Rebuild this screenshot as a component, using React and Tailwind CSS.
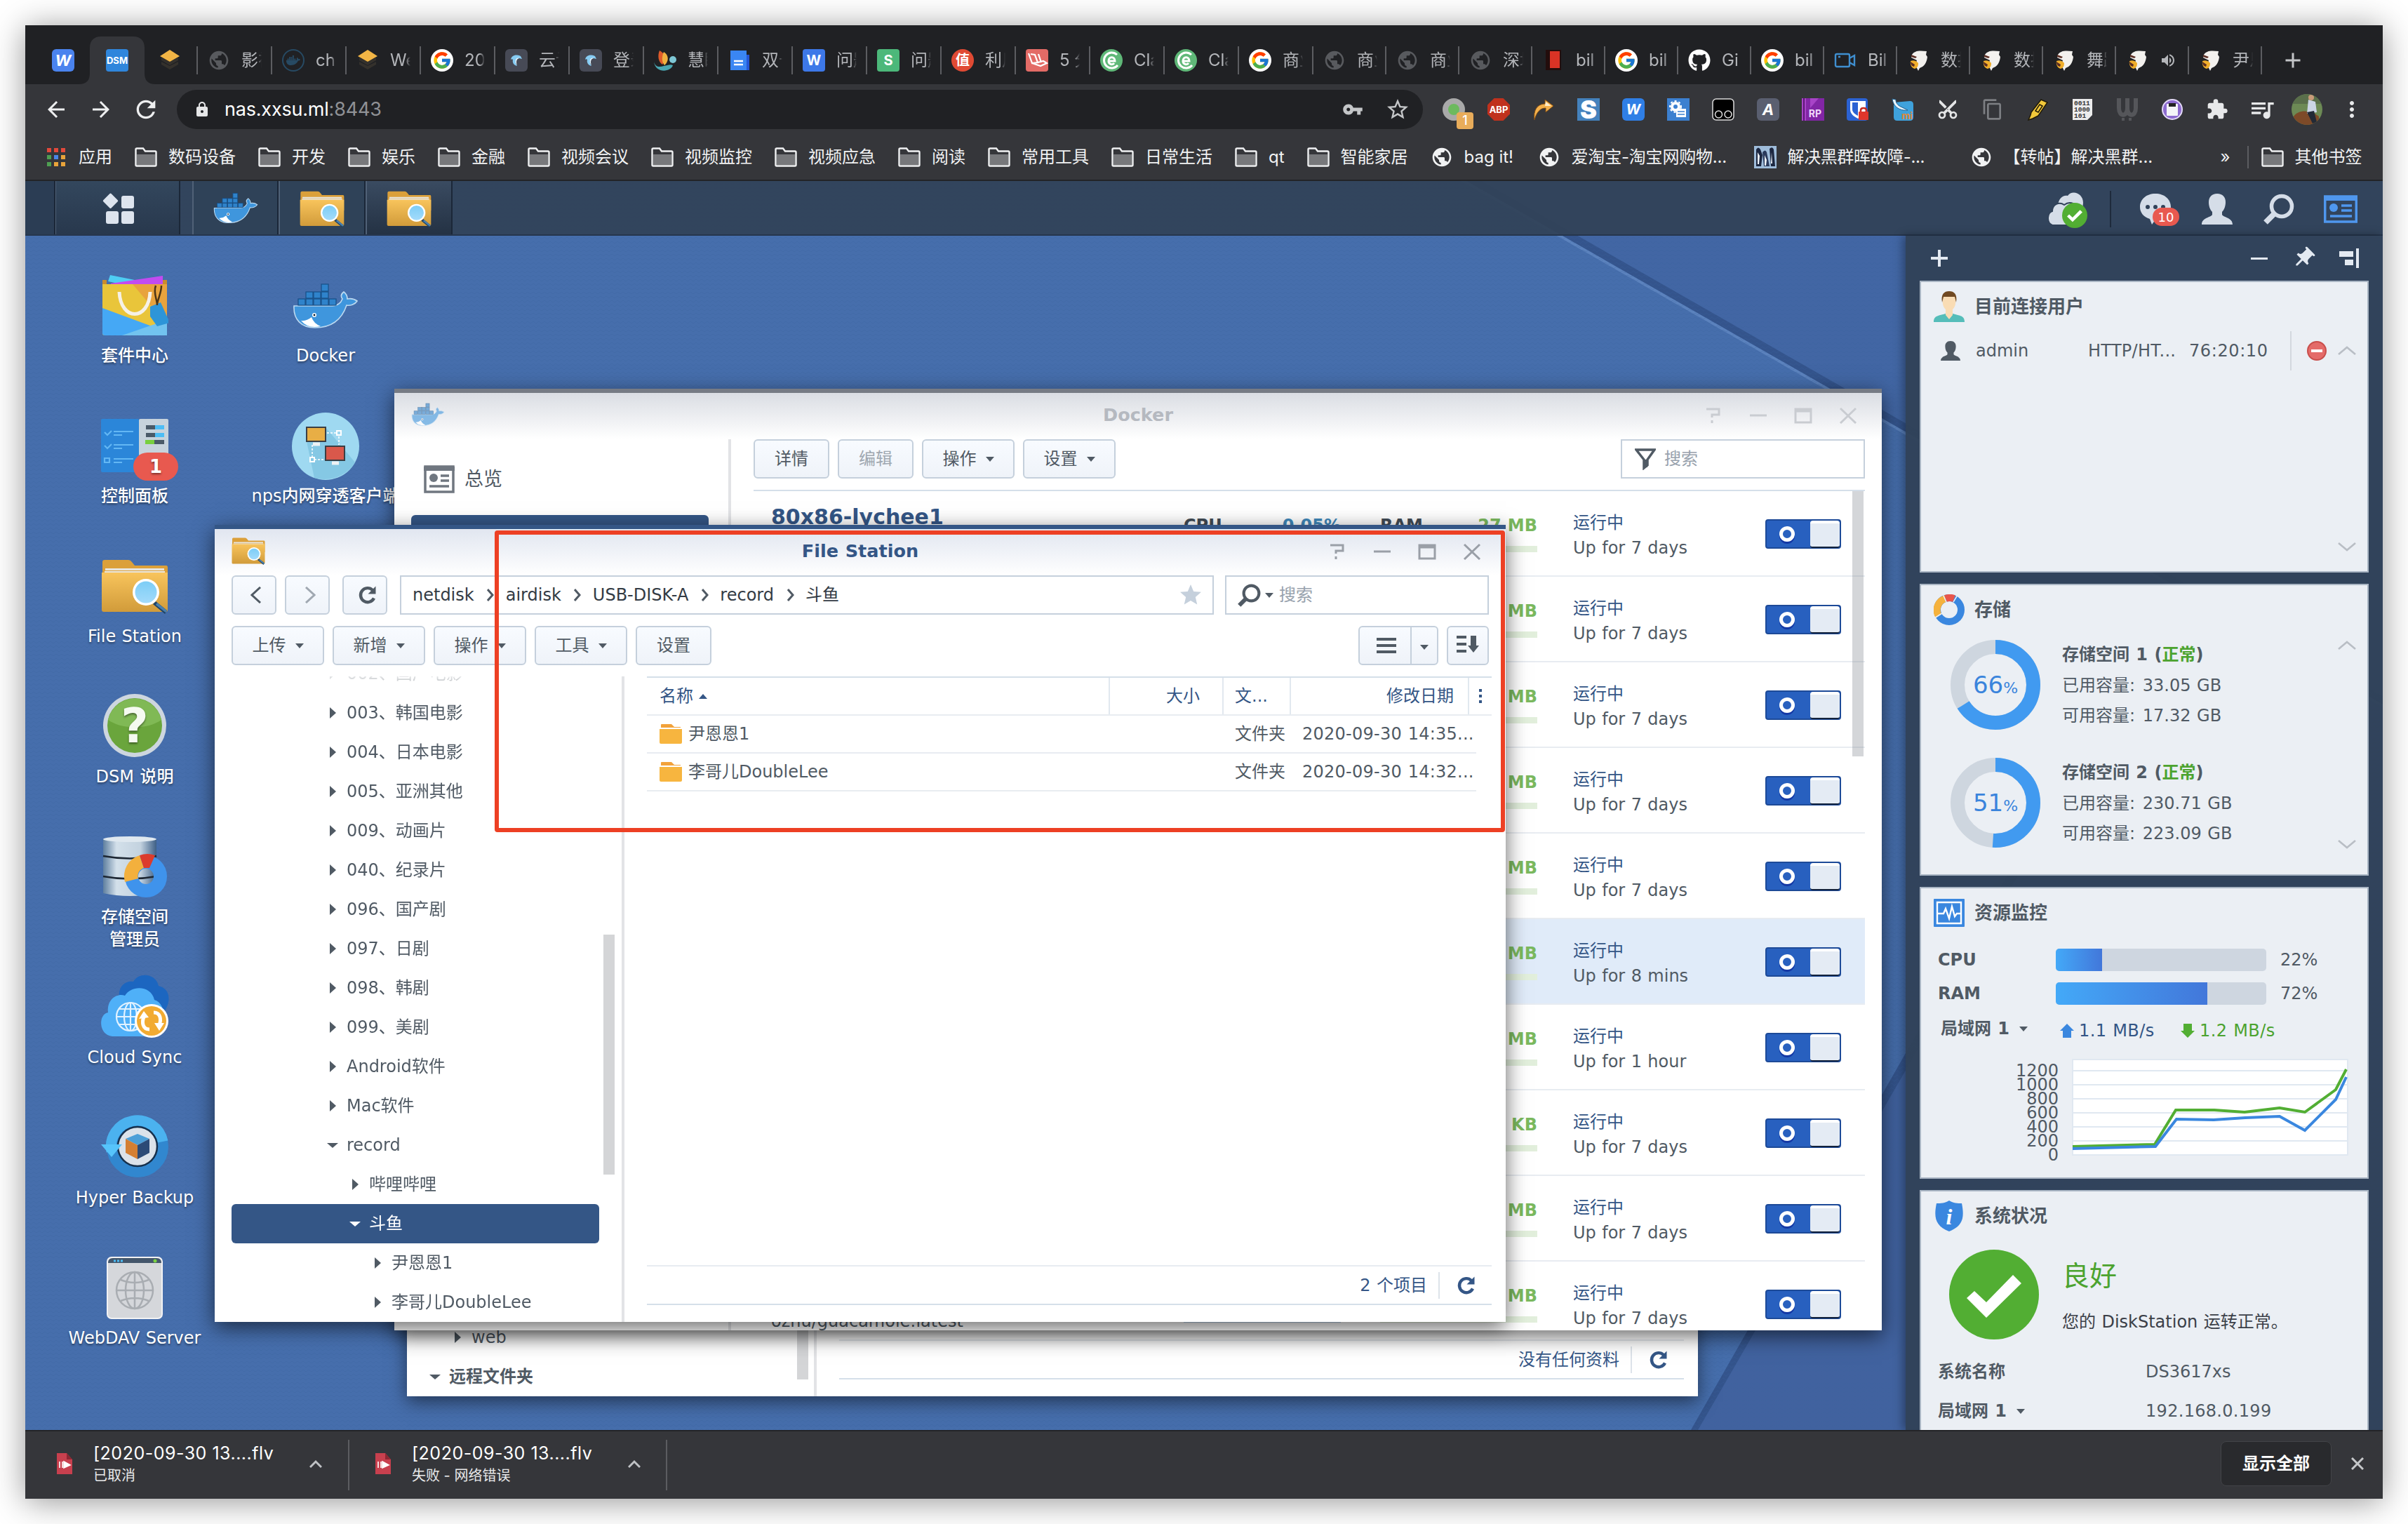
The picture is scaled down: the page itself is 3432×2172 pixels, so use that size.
import React from "react";
import { FcGoogle } from "react-icons/fc";
import { FaGithub, FaDocker } from "react-icons/fa";
import { MdPublic, MdLock, MdVpnKey, MdStarBorder, MdArrowBack, MdArrowForward, MdRefresh, MdVolumeUp, MdExtension, MdQueueMusic, MdMoreVert, MdContentCut, MdContentCopy, MdAdd, MdStar, MdPushPin } from "react-icons/md";

/* ---------- shared drawings ---------- */

function Folder({ className }) {
  return (
    <svg viewBox="0 0 96 78" className={className}>
      <path d="M2 4q0-3 3-3h34q3 0 5 3l4 5h45q2 0 2 3v30H2z" fill="#dba03a" />
      <path d="M6 13h84v3H6zM5 17h86v4H5z" fill="#e9e6df" />
      <path d="M1 19h94v53q0 3-3 3H4q-3 0-3-3z" fill="url(#folderGrad)" />
      <path d="M78 60l16 13-3 5-17-14z" fill="#1f4468" />
      <path d="M80 62l14 11-2 3-14-11z" fill="#4a80ad" />
      <circle cx="64" cy="47" r="19" fill="#fff" />
      <circle cx="64" cy="47" r="15.5" fill="url(#lensGrad)" />
    </svg>
  );
}

function Whale({ className }) {
  return (
    <svg viewBox="0 0 94 66" className={className}>
      <path
        d="M2 33H57C63 33 69 29 71 23C68 19 69 16 73 13C77 16 78 19 78 23C83 22 88 23 92 26C89 31 82 33 77 32C70 53 55 64 32 64C12 64 1 52 2 33Z"
        fill="#3f96dd"
        stroke="#bcd9f0"
        strokeWidth="1.6"
      />
      <g fill="#2f83cb" stroke="#174f86" strokeWidth="1.2">
        {[8, 19, 30, 41, 52].map((x) => (
          <rect key={x} x={x} y="23" width="10" height="9" />
        ))}
        {[19, 30, 41].map((x) => (
          <rect key={x} x={x} y="13" width="10" height="9" />
        ))}
        <rect x="41" y="2" width="10" height="10" />
      </g>
      <path d="M12 54q8 1 15-5q3 9 13 13q-18 4-28-8z" fill="#fff" />
      <circle cx="31" cy="46" r="3" fill="#fff" />
      <circle cx="31" cy="46" r="1.4" fill="#123" />
    </svg>
  );
}

const Person = ({ className }) => (
  <svg viewBox="0 0 44 44" className={className} fill="currentColor">
    <path d="M22 0c8 0 12 5 12 12 0 6-2 11-5 14v4c2 4 15 4 15 14H0c0-10 13-10 15-14v-4c-3-3-5-8-5-14C10 5 14 0 22 0z" />
  </svg>
);

const Search = ({ className }) => (
  <svg viewBox="0 0 44 44" className={className} fill="none" stroke="currentColor">
    <circle cx="26" cy="18" r="14.5" strokeWidth="5.5" />
    <path d="M15 29L3 41" strokeWidth="8" />
  </svg>
);

const Caret = ({ className }) => (
  <svg viewBox="0 0 12 7" className={className ?? "w-3"}>
    <path d="M0 0h12L6 7z" fill="currentColor" />
  </svg>
);

const Refresh = ({ className }) => (
  <svg viewBox="0 0 28 28" className={className} fill="none" stroke="currentColor" strokeWidth="4.4">
    <path d="M23 18.5A10 10 0 1 1 21 7" />
    <path d="M25.5 1.5v11h-11z" fill="currentColor" stroke="none" />
  </svg>
);

const Chevron = ({ up }) => (
  <svg viewBox="0 0 26 16" className="h-4 w-[26px]" fill="none" stroke="#b9bec5" strokeWidth="2.6">
    <path d={up ? "M1 13L13 3l12 10" : "M1 3l12 10L25 3"} />
  </svg>
);

const Check = ({ className }) => (
  <svg viewBox="0 0 128 128" className={className}>
    <circle cx="64" cy="64" r="64" fill="#52ae33" />
    <path d="M25 69l11-10 17 16 38-39 12 12-50 49z" fill="#fff" />
  </svg>
);

/* ---------- browser chrome ---------- */

const Glyph = ({ children, className }) => (
  <div className={"flex h-8 w-8 shrink-0 items-center justify-center overflow-hidden leading-none font-bold text-white " + className}>{children}</div>
);

const Stack = () => (
  <svg viewBox="0 0 32 32" className="h-8 w-8 shrink-0">
    <path d="M4 18l12 6 12-6v4l-12 7-12-7zM4 12l12 6 12-6v4l-12 7-12-7z" fill="#34312c" />
    <path d="M16 1l14 9-14 8L2 10z" fill="#f2b545" />
  </svg>
);

const Dolphin = () => (
  <Glyph className="rounded-md bg-[#474a56]">
    <svg viewBox="0 0 32 32" className="h-8 w-8">
      <path d="M8 15c1-6 7-8 14-5l2 4-4-1c-5 0-7 5-3 11-5-1-7-5-6-9-1-1-2-1-3 0z" fill="#86cbf2" />
      <path d="M15 15c1-2 3-3 5-2-4 1-5 5-3 10-2-2-3-5-2-8z" fill="#e9f6ff" />
    </svg>
  </Glyph>
);

const Shark = () => (
  <svg viewBox="0 0 32 32" className="h-8 w-8 shrink-0">
    <path d="M7 8c4-6 10-6 21-5l-1 5 2 3c-1 9-5 14-11 16l-2 4-2-4c-3-3-1-8 0-11l-8-4z" fill="#f3f1ee" />
    <path d="M5 17c4-2 9 0 11 3 0 5-2 7-5 8-4-1-7-5-6-11z" fill="#f0ae2b" />
    <path d="M6 8l8 3-2 2-6-2zM5 18l6 4-1 3c-4-1-5-4-5-7z" fill="#5b2d22" />
  </svg>
);

const Globe = () => <MdPublic className="h-8 w-8 shrink-0 text-[#585a5e]" />;
const Google = () => (
  <div className="flex h-8 w-8 shrink-0 items-center justify-center rounded-full bg-white">
    <FcGoogle className="h-7 w-7" />
  </div>
);

const Cc = () => (
  <Glyph className="rounded-full bg-[#5fb878]">
    <svg viewBox="0 0 32 32" className="h-8 w-8" fill="none" stroke="#fff" strokeWidth="3">
      <path d="M24 8a11 11 0 1 0 1 15M12 17h9c0-7-9-7-9 0 0 5 6 6 8 3" />
    </svg>
  </Glyph>
);

const wideTabs = [
  [<Globe />, "影视"],
  [
    <div className="flex h-8 w-8 shrink-0 items-center justify-center rounded-full border-2 border-[#274a63]">
      <FaDocker className="h-5 w-5 text-[#274a63]" />
    </div>,
    "ch",
  ],
  [<Stack />, "We"],
  [<Google />, "20"],
  [<Dolphin />, "云计"],
  [<Dolphin />, "登录"],
  [
    <svg viewBox="0 0 32 32" className="h-8 w-8 shrink-0">
      <path d="M8 2c8 4 10 13 4 20C6 18 5 9 8 2z" fill="#df5b2b" />
      <path d="M14 4c7 4 8 13 1 19-4-5-4-12-1-19z" fill="#f0b13f" />
      <path d="M0 18c2 8 8 8 14 6 5-1 10-3 13-1-3 10-25 12-27-5z" fill="#4aa7b2" />
      <circle cx="27" cy="15" r="5" fill="#7ec7d5" />
    </svg>,
    "慧眼",
  ],
  [
    <svg viewBox="0 0 32 32" className="h-8 w-8 shrink-0">
      <path d="M6 8h24v22H6z" fill="#2456d6" />
      <path d="M3 2h23v28H3z" fill="#3a86f3" />
      <path d="M8 17h13M8 22h13" stroke="#fff" strokeWidth="2.4" />
    </svg>,
    "双十",
  ],
  [<Glyph className="rounded-sm bg-[#3d78e8] text-[20px]">W</Glyph>, "问题"],
  [<Glyph className="rounded-sm bg-[#4cb87a] text-[20px]">S</Glyph>, "问题"],
  [<Glyph className="rounded-full bg-[#e04a33] text-[20px]">值</Glyph>, "利用"],
  [
    <Glyph className="rounded bg-[#e36b66]">
      <svg viewBox="0 0 32 32" className="h-8 w-8" fill="none" stroke="#fff" strokeWidth="2.2">
        <path d="M4 6l5 14 8-1-4-11-6-1M9 20l12 4 9-4-5-3-8 2M18 7l4 12" />
      </svg>
    </Glyph>,
    "5 分",
  ],
  [<Cc />, "Cla"],
  [<Cc />, "Cla"],
  [<Google />, "商业"],
];

const slimTabs = [
  [<Globe />, "商业"],
  [<Globe />, "商业"],
  [<Globe />, "深圳"],
  [
    <svg viewBox="0 0 32 32" className="h-8 w-8 shrink-0">
      <path d="M5 1h22v29H5z" fill="#230d0c" />
      <path d="M11 3h14v24H11z" fill="#d93325" />
    </svg>,
    "bil",
  ],
  [<Google />, "bil"],
  [<FaGithub className="h-8 w-8 shrink-0 text-white" />, "Gi"],
  [<Google />, "bil"],
  [
    <svg viewBox="0 0 32 32" className="h-8 w-8 shrink-0" fill="none" stroke="#3f8fd0" strokeWidth="2.4">
      <rect x="2" y="7" width="20" height="18" rx="2" />
      <path d="M22 13l7-4v14l-7-4M6 11h3" />
    </svg>,
    "Bil",
  ],
  [<Shark />, "数据"],
  [<Shark />, "数据"],
  [<Shark />, "舞蹈"],
  [<Shark />, <MdVolumeUp className="h-6 w-6" />],
  [<Shark />, "尹恩"],
];

function Tab({ icon, label, className }) {
  return (
    <div className={"flex h-full shrink-0 items-center pt-4 pl-[14px] " + className}>
      {icon}
      <div className="ml-4 w-[29px] overflow-hidden text-[24px] whitespace-nowrap text-[#b4b6ba] [mask-image:linear-gradient(to_right,black_74%,transparent)]">{label}</div>
      <div className="ml-auto h-10 w-[2px] bg-[#5c5d61]" />
    </div>
  );
}

function TabStrip() {
  return (
    <div className="flex h-[84px] shrink-0 items-center bg-[#202124]">
      <div className="h-full w-[92px] pt-[34px] pl-[38px]">
        <Glyph className="rounded-md bg-[#4a83ee] text-[22px] italic">W</Glyph>
      </div>
      <div className="relative h-full w-[78px] pt-[34px] pl-[23px]">
        <svg viewBox="0 0 110 68" className="absolute top-4 left-[-16px] h-[68px] w-[110px]">
          <path d="M0 68c12 0 16-6 16-16V16C16 6 22 0 32 0h46c10 0 16 6 16 16v36c0 10 4 16 16 16z" fill="#35363a" />
        </svg>
        <Glyph className="relative rounded-sm bg-[#2f86dc] text-[13px]">DSM</Glyph>
      </div>
      <div className="flex h-full w-[76px] items-center pt-4 pl-5">
        <Stack />
        <div className="ml-auto h-10 w-[2px] bg-[#5c5d61]" />
      </div>
      {wideTabs.map(([icon, label], i) => (
        <Tab key={i} icon={icon} label={label} className="w-[106px]" />
      ))}
      {slimTabs.map(([icon, label], i) => (
        <Tab key={i} icon={icon} label={label} className="w-[104px]" />
      ))}
      <MdAdd className="mt-4 ml-[26px] h-9 w-9 text-[#c3c5c8]" />
    </div>
  );
}

const extensions = [
  <div className="relative">
    <div className="h-8 w-8 rounded-full border-[8px] border-[#a9a9a9] bg-[#6cba5e]" />
    <div className="absolute top-5 left-5 flex h-6 w-6 items-center justify-center rounded bg-[#e8ac5a] text-[18px] leading-none font-medium text-white">1</div>
  </div>,
  <svg viewBox="0 0 32 32" className="h-8 w-8">
    <path d="M9.500 0h13L32 9.500v13L22.500 32h-13L0 22.500v-13z" fill="#c0311d" />
    <text x="16" y="21" textAnchor="middle" fontSize="13" fontWeight="700" fill="#fff">ABP</text>
  </svg>,
  <svg viewBox="0 0 32 32" className="h-8 w-8">
    <path d="M3 31C1 17 7 8 18 8V2l12 9-11 9v-6C11 14 6 20 3 31z" fill="#f4b14c" stroke="#7d4a12" />
    <path d="M19 5l8 6H18z" fill="#fdeccb" />
  </svg>,
  <svg viewBox="0 0 32 32" className="h-8 w-8">
    <path d="M0 0h32v32H0z" fill="#4482bd" />
    <text x="16" y="29" textAnchor="middle" fontSize="36" fontWeight="900" fill="#fff">S</text>
  </svg>,
  <Glyph className="rounded-md bg-[#2f7fe6] text-[20px] italic">W</Glyph>,
  <svg viewBox="0 0 32 32" className="h-8 w-8">
    <rect width="32" height="32" fill="#3c80d0" />
    <circle cx="12" cy="12" r="5" fill="none" stroke="#fff" strokeWidth="4" />
    <circle cx="12" cy="12" r="8" fill="none" stroke="#fff" strokeWidth="2" strokeDasharray="3 3" />
    <path d="M13 15h14v12H13z" fill="#fff" />
    <path d="M15 19h10M15 23h10" stroke="#3c80d0" strokeWidth="1.500" />
  </svg>,
  <svg viewBox="0 0 32 32" className="h-8 w-8" stroke="#ddd">
    <rect x="1" y="1" width="30" height="30" rx="5" fill="#000" strokeWidth="1.500" />
    <circle cx="9.500" cy="23" r="5" fill="none" strokeWidth="1.500" />
    <circle cx="23" cy="23" r="5" fill="none" strokeWidth="1.500" />
  </svg>,
  <Glyph className="rounded-md bg-[#5a5f70] text-[22px] italic">A</Glyph>,
  <svg viewBox="0 0 32 32" className="h-8 w-8">
    <path d="M0 0h32v32H0z" fill="#8226a6" />
    <path d="M0 0h6v32H0zM12 0h12L12 14z" fill="#a844c8" />
    <path d="M2 0h2v32H2z" fill="#5d1578" />
    <text x="19" y="27" textAnchor="middle" fontSize="14" fontWeight="700" fill="#f0d8fa">RP</text>
  </svg>,
  <svg viewBox="0 0 32 32" className="h-8 w-8">
    <rect width="30" height="32" rx="4" fill="#2b62d3" />
    <path d="M5 4h22v12c0 6-5 10-11 13C10 26 5 22 5 16z" fill="#fff" />
    <path d="M8 6h8v19c-4-2-8-5-8-9z" fill="#2b62d3" />
    <path d="M20 20v-3c0-4 8-4 8 0v3" fill="none" stroke="#c82a20" strokeWidth="2.500" />
    <rect x="17" y="19" width="14" height="12" rx="1" fill="#e0362b" />
  </svg>,
  <svg viewBox="0 0 32 32" className="h-8 w-8">
    <path d="M3 6l23-2q5 0 5 5v18q0 5-5 5H8q-5 0-5-5z" fill="#3fa2dc" />
    <path d="M1 1l5 1c0 6 4 9 9 11l8 4c-8 1-20-2-22-16z" fill="#e9f6ff" stroke="#1c5d8c" />
    <text x="22" y="30" textAnchor="middle" fontSize="13" fontWeight="700" fill="#e8872f">mi</text>
  </svg>,
  <MdContentCut className="h-8 w-8 -rotate-90 text-[#e4e5e6]" />,
  <MdContentCopy className="h-8 w-8 text-[#7d7f83]" />,
  <svg viewBox="0 0 32 32" className="h-8 w-8">
    <path d="M21 2l9 4-13 19-8 4-6 2 3-7 1-4z" fill="#f2c83b" stroke="#201a08" strokeWidth="1.500" />
    <path d="M19 9l4 2-6 9-4-2z" fill="none" stroke="#201a08" strokeWidth="1.500" />
  </svg>,
  <svg viewBox="0 0 32 32" className="h-8 w-8">
    <path d="M2 1h28v23l-7 7H2z" fill="#ececec" />
    <g fontSize="9.500" fontWeight="700" fill="#333" fontFamily="Liberation Mono">
      <text x="4" y="10">0011</text>
      <text x="4" y="19">1000</text>
      <text x="4" y="28">101</text>
    </g>
  </svg>,
  <svg viewBox="0 0 32 32" className="h-8 w-8" fill="none" stroke="#55565a" strokeWidth="6">
    <path d="M4 0v14c0 13 12 13 12 0V0M16 0v14c0 13 12 13 12 0V0" />
    <path d="M10 28v4M20 28v4" strokeWidth="4" />
  </svg>,
  <svg viewBox="0 0 32 32" className="h-8 w-8">
    <circle cx="16" cy="16" r="14" fill="#8d6bd0" stroke="#e3d9f7" strokeWidth="2" />
    <rect x="8" y="8" width="16" height="17" rx="1" fill="#f4f4f8" />
    <rect x="11" y="7" width="10" height="5" fill="#222" />
  </svg>,
  <MdExtension className="h-8 w-8 text-[#e8e9ea]" />,
  <MdQueueMusic className="h-10 w-10 text-[#e8e9ea]" />,
  <svg viewBox="0 0 44 44" className="h-11 w-11">
    <clipPath id="avatarClip">
      <circle cx="22" cy="22" r="22" />
    </clipPath>
    <g clipPath="url(#avatarClip)">
      <path d="M0 0h44v44H0z" fill="#6d8a55" />
      <path d="M0 0h44v14H0z" fill="#5a6f4b" />
      <path d="M3 32c6-10 24-10 36 0v12H3z" fill="#7d4a28" />
      <path d="M24 8l10 3 2 15-14 2z" fill="#ccd6e6" />
      <circle cx="28" cy="5" r="4" fill="#c99b7a" />
      <path d="M22 26l10-2 4 16-6 2z" fill="#222a36" />
    </g>
  </svg>,
  <MdMoreVert className="h-9 w-9 text-[#e8e9ea]" />,
];

function Toolbar() {
  return (
    <div className="flex h-[72px] shrink-0 items-center bg-[#35363a] pl-3">
      {[<MdArrowBack key="b" className="h-9 w-9" />, <MdArrowForward key="f" className="h-9 w-9" />, <MdRefresh key="r" className="h-10 w-10" />].map((icon, i) => (
        <div key={i} className="flex w-16 justify-center text-[#eeeff0]">
          {icon}
        </div>
      ))}
      <div className="ml-3 flex h-14 w-[1776px] items-center rounded-full bg-[#202124] pl-6 text-[27px]">
        <MdLock className="h-6 w-6 text-[#e6e7e8]" />
        <div className="ml-5 tracking-[-0.2px] text-white">
          nas.xxsu.ml<span className="text-[#8f9195]">:8443</span>
        </div>
        <MdVpnKey className="ml-auto h-[30px] w-[30px] text-[#c4c6c8]" />
        <MdStarBorder className="mr-[18px] ml-[31px] h-9 w-9 text-[#c4c6c8]" />
      </div>
      <div className="ml-3 flex">
        {extensions.map((icon, i) => (
          <div key={i} className="flex w-16 items-center justify-center">
            {icon}
          </div>
        ))}
      </div>
    </div>
  );
}

const BookmarkFolder = () => (
  <svg viewBox="0 0 32 28" className="h-7 w-8 shrink-0">
    <path d="M1.500 3q0-1.500 1.500-1.500h9l3 4h14q1.500 0 1.500 1.500v18q0 1.500-1.500 1.500H3q-1.500 0-1.500-1.500z" fill="#35363a" stroke="#f0f1f2" strokeWidth="2.400" />
    <path d="M3 10h26v15H3z" fill="#77787b" />
  </svg>
);

const Penguins = () => (
  <svg viewBox="0 0 32 32" className="h-8 w-8 shrink-0">
    <path d="M0 0h32v32H0z" fill="#9fbddb" />
    <path d="M3 5q3-5 6 0l3 8-2 16H3z" fill="#1c2740" />
    <path d="M12 9q4-5 6 0l4 20h-8z" fill="#2a3a5c" />
    <path d="M22 4q4-4 6 1l2 24h-6z" fill="#1c2740" />
    <path d="M5 9l3 5-1 12H5zM15 13l3 7-1 8h-2zM25 9l1 16h-2z" fill="#eef3f8" />
  </svg>
);

const bookmarks = ["数码设备", "开发", "娱乐", "金融", "视频会议", "视频监控", "视频应急", "阅读", "常用工具", "日常生活", "qt", "智能家居"];

function Bookmarks() {
  return (
    <div className="flex h-[66px] shrink-0 items-center border-b-2 border-[#232427] bg-[#35363a] pl-[29px] text-[24px] whitespace-nowrap text-[#f1f2f3]">
      <div className="grid w-8 shrink-0 grid-cols-[6px_6px_6px] gap-1 pl-0.5">
        {["bg-[#e2493b]", "bg-[#e2493b]", "bg-[#e2493b]", "bg-[#4f9f52]", "bg-[#4a86e8]", "bg-[#e8a33a]", "bg-[#4f9f52]", "bg-[#e8a33a]", "bg-[#e8a33a]"].map((c, i) => (
          <div key={i} className={"h-[6px] w-[6px] " + c} />
        ))}
      </div>
      <div className="ml-[15px] w-20 shrink-0">应用</div>
      {bookmarks.map((b) => (
        <div key={b} className="mr-8 flex shrink-0 items-center gap-4">
          <BookmarkFolder />
          {b}
        </div>
      ))}
      <div className="flex w-[153px] shrink-0 items-center gap-4">
        <MdPublic className="h-8 w-8 shrink-0" />
        bag it!
      </div>
      <div className="flex w-[308px] shrink-0 items-center gap-4">
        <MdPublic className="h-8 w-8 shrink-0" />
        <span className="tracking-[-0.2px]">爱淘宝-淘宝网购物...</span>
      </div>
      <div className="flex w-[308px] shrink-0 items-center gap-4">
        <Penguins />
        <span className="tracking-[-0.4px]">解决黑群晖故障-...</span>
      </div>
      <div className="flex w-[357px] shrink-0 items-center gap-4">
        <MdPublic className="h-8 w-8 shrink-0" />
        <span>【转帖】解决黑群...</span>
      </div>
      <div className="w-[38px] shrink-0">»</div>
      <div className="h-8 w-[2px] shrink-0 bg-[#5c5d61]" />
      <div className="ml-[18px] flex shrink-0 items-center gap-4">
        <BookmarkFolder />
        其他书签
      </div>
    </div>
  );
}

/* ---------- DSM desktop ---------- */

function Wallpaper() {
  return (
    <svg viewBox="0 0 3360 1780" className="absolute inset-0 h-[1780px] w-[3360px]">
      <defs>
        <linearGradient id="folderGrad" x2="0" y2="1">
          <stop stopColor="#f8c45c" />
          <stop offset="1" stopColor="#d19b3a" />
        </linearGradient>
        <linearGradient id="lensGrad" x2="0" y2="1">
          <stop stopColor="#7ccdf6" />
          <stop offset="1" stopColor="#a3dbfb" />
        </linearGradient>
        <linearGradient id="diskGrad">
          <stop stopColor="#5f7f9f" />
          <stop offset="0.250" stopColor="#d3e0ea" />
          <stop offset="0.700" stopColor="#c3d2df" />
          <stop offset="1" stopColor="#3d5f86" />
        </linearGradient>
        <pattern id="weave" width="8" height="6" patternUnits="userSpaceOnUse">
          <path d="M0 5L4 2L8 5" fill="none" stroke="#3a5f9b" strokeWidth="1" opacity="0.300" />
        </pattern>
      </defs>
      <path d="M0 0h3360v1780H0z" fill="#466eac" />
      <path d="M2054 0H3360v740z" fill="#4266a4" />
      <path d="M2830 980L2374 1780H2700V1100z" fill="#41629f" />
      <path d="M2054 0h22L3360 734v12z" fill="#34548c" />
      <path d="M2054 0L3360 746v4L2046 0z" fill="#5b82bd" />
      <path d="M2830 980L2374 1780h10L2846 980z" fill="#34548c" />
      <path d="M0 0h3360v1780H0z" fill="url(#weave)" />
    </svg>
  );
}

function Taskbar() {
  return (
    <div className="relative flex h-[78px] shrink-0 items-center border-b-2 border-[#26364d] bg-[#314259]/95">
      <div className="h-full w-[43px] border-r-2 border-[#1b2738] bg-[#2b3d54]" />
      <div className="flex h-full w-[178px] items-center justify-center border-r-2 border-l border-l-[#506177] border-r-[#1b2738] bg-linear-to-b from-[#33475d] to-[#28384d]">
        <svg viewBox="0 0 46 46" className="h-[46px] w-[46px]" fill="#dde4ee">
          <rect x="5" y="5" width="16" height="16" rx="1.500" transform="rotate(45 12.500 12.500)" />
          <rect x="28" y="6" width="18" height="18" rx="3" />
          <rect x="6" y="28" width="18" height="18" rx="3" />
          <rect x="28" y="28" width="18" height="18" rx="3" />
        </svg>
      </div>
      <div className="ml-[17px] flex h-full w-[123px] items-center justify-center border-r-2 border-l-2 border-l-[#506177] border-r-[#1b2738] bg-[#2f4258]">
        <Whale className="w-16" />
      </div>
      <div className="flex h-full w-[124px] items-center justify-center border-r-2 border-l-2 border-l-[#506177] border-r-[#1b2738] bg-[#2f4258] pt-1">
        <Folder className="w-16" />
      </div>
      <div className="flex h-full w-[124px] items-center justify-center border-r-2 border-l-2 border-l-[#506177] border-r-[#1b2738] bg-linear-to-b from-[#3a4b61] to-[#243244] pt-1">
        <Folder className="w-16" />
      </div>
      <div className="ml-auto flex items-center pt-1 text-[#d5dde8]">
        <div className="relative h-[50px] w-14">
          <svg viewBox="0 0 56 50" className="w-14" fill="currentColor">
            <path d="M14 24c-1-14 8-20 14-18 6-9 22-4 22 10l-2 18-30 4z" />
            <path d="M6 48C-3 44-1 30 6 28c0-10 10-14 17-9 8-6 20-2 21 9 6 2 8 8 6 20z" stroke="#314259" strokeWidth="2" />
          </svg>
          <div className="absolute top-4 left-5">
            <Check className="w-9" />
          </div>
        </div>
        <div className="ml-8 h-[52px] w-[2px] bg-[#1e2b3c]" />
        <div className="relative ml-[41px] h-11 w-11">
          <svg viewBox="0 0 44 44" className="w-11">
            <path d="M22 0c13 0 22 8 22 19S35 37 22 37l-5 7-3-8C5 33 0 27 0 19 0 8 9 0 22 0z" fill="currentColor" />
            <g fill="#314259">
              <circle cx="11" cy="19" r="3" />
              <circle cx="22" cy="19" r="3" />
              <circle cx="33" cy="19" r="3" />
            </g>
          </svg>
          <div className="absolute top-5 left-[18px] flex h-[26px] w-[38px] items-center justify-center rounded-full bg-[#e8594f] text-[18px] text-white">10</div>
        </div>
        <Person className="ml-11 w-11" />
        <Search className="ml-[44px] w-11" />
        <svg viewBox="0 0 48 40" className="mr-[36px] ml-[42px] w-12" fill="none" stroke="#4f97ee" strokeWidth="3.500">
          <rect x="1.700" y="2" width="44.600" height="36" />
          <path d="M0 5h48" strokeWidth="6" />
          <circle cx="14" cy="18" r="6" fill="#4f97ee" stroke="none" />
          <path d="M25 15h15M25 22h15M9 30h31" />
        </svg>
      </div>
    </div>
  );
}

const art = {
  package: (
    <svg viewBox="0 0 96 90" className="h-[90px] w-24">
      <path d="M10 10L13 1l70 14-4 10z" fill="#4ecdf3" />
      <path d="M14 13L88 2v22H14z" fill="#c24bf0" />
      <path d="M2 8h6v10H2zM88 8h6v10h-6z" fill="#c98d2c" />
      <path d="M2 14h92v70q0 3-3 3H5q-3 0-3-3z" fill="#e9c53a" />
      <path d="M45 14h49v58z" fill="#e8a33d" />
      <path d="M2 48l92 34v2q0 3-3 3H5q-3 0-3-3z" fill="#45a8f5" />
      <path d="M30 87l64-22v22z" fill="#72c3ef" />
      <path d="M26 25c2 42 42 42 44 0" fill="none" stroke="#f6f1e6" strokeWidth="5" />
      <path d="M70 46l15-6 13 29-18 5-10-14z" fill="#2d95d8" />
      <path d="M78 16c-4 10 2 20 2 28M86 16c0 10-4 16-6 26" fill="none" stroke="#4a3518" strokeWidth="2.500" />
    </svg>
  ),
  control: (
    <div className="relative">
      <svg viewBox="0 0 96 78" className="h-[78px] w-24">
        <rect width="54" height="76" rx="2" fill="#2b86d9" />
        <rect x="54" width="42" height="76" rx="2" fill="#c7d3dc" />
        <g fill="none" stroke="#63b7f4" strokeWidth="2.200">
          <path d="M5 19l4 4 6-6M18 18h28M18 23h12M5 38l4 4 6-6M18 37h28M18 42h12M5 56h7v6H5zM18 57h28M18 62h12" />
        </g>
        <path d="M64 12h26M64 23h26M64 33h26" stroke="#4a5a68" strokeWidth="6" />
        <path d="M77 12h13M77 23h13" stroke="#4dbdf5" strokeWidth="6" />
        <path d="M63 33h13" stroke="#78cf3e" strokeWidth="6" />
      </svg>
      <div className="absolute top-[48px] left-[46px] flex h-10 w-16 items-center justify-center rounded-full bg-[#e8594f] text-[26px] font-bold">1</div>
    </div>
  ),
  help: (
    <svg viewBox="0 0 92 92" className="mb-1 h-[92px] w-[92px]">
      <circle cx="46" cy="46" r="45" fill="#cdd6df" />
      <circle cx="46" cy="46" r="39" fill="#6aa53c" />
      <path d="M8 38a39 39 0 0 1 76 0c-20 14-56 14-76 0z" fill="#80b955" />
      <text x="46" y="70" textAnchor="middle" fontSize="68" fontWeight="700" fill="#f5faf0" fontFamily="DejaVu Sans">?</text>
    </svg>
  ),
  storage: (
    <svg viewBox="0 0 94 90" className="h-[90px] w-[94px]">
      <path d="M2 5q37-6 76 0v77q-38 8-76 0z" fill="url(#diskGrad)" />
      <ellipse cx="40" cy="5" rx="38" ry="4" fill="#dfe8ef" />
      <path d="M2 29q38 7 76 0M2 58q38 7 76 0" fill="none" stroke="#1d2733" strokeWidth="2.500" />
      <circle cx="63" cy="58" r="20.500" fill="none" stroke="#3f93ec" strokeWidth="19" />
      <path d="M33 66A31 31 0 0 1 54 28l6 18a12 12 0 0 0-8 15z" fill="#f3b03d" />
      <path d="M54 28a31 31 0 0 1 22 0l-8 18h-8z" fill="#dc3b2c" />
    </svg>
  ),
  cloud: (
    <svg viewBox="0 0 96 90" className="mb-[5px] h-[90px] w-24 overflow-visible">
      <path d="M26 32C24 14 38 8 46 10 54-4 78-2 82 16c16 4 18 20 10 34l-50 6z" fill="#1c66c0" />
      <path d="M16 88C-4 86-4 56 10 54 8 34 24 26 34 30c10-16 38-14 42 6 18 4 22 50 0 52z" fill="#4fb0f8" />
      <g fill="none" stroke="#e1f2ff" strokeWidth="2.200">
        <circle cx="42" cy="60" r="20" />
        <ellipse cx="42" cy="60" rx="9" ry="20" />
        <path d="M22 60h40M42 40v40M26 49h32M26 71h32" />
      </g>
      <circle cx="72" cy="66" r="24" fill="#fff" />
      <circle cx="72" cy="66" r="21" fill="#f2ab32" />
      <path d="M69 78c-10 0-11-10-8-18M75 54c10 0 11 10 8 18" fill="none" stroke="#fff" strokeWidth="5" />
      <path d="M54 63l7-11 7 9zM76 69l7 11 7-11z" fill="#fff" />
    </svg>
  ),
  backup: (
    <svg viewBox="0 0 96 90" className="mb-1 h-[90px] w-24">
      <circle cx="52" cy="45" r="36" fill="none" stroke="#3187cf" strokeWidth="16" />
      <path d="M15 52A37 37 0 0 1 88 38" fill="none" stroke="#4bb2ef" strokeWidth="15" />
      <circle cx="52" cy="45" r="28" fill="#dbe2ea" stroke="#16304c" strokeWidth="2.500" />
      <path d="M52 27l17 7-17 9-17-9z" fill="#4c9fd8" />
      <path d="M35 34l17 9v20l-17-9z" fill="#d47f33" />
      <path d="M69 34l-17 9v20l17-9z" fill="#2c4a76" />
      <path d="M0 42h30L15 60z" fill="#56c4fb" />
    </svg>
  ),
  webdav: (
    <svg viewBox="0 0 80 90" className="h-[90px] w-20">
      <rect x="1" y="1" width="78" height="87" rx="6" fill="#d5d7db" stroke="#f2f2f4" strokeWidth="2" />
      <path d="M2 9q0-7 7-7h62q7 0 7 7z" fill="#44566b" />
      <circle cx="69" cy="6" r="2.500" fill="#7bd142" />
      <path d="M10 6h14" stroke="#4dbdf5" strokeWidth="3" strokeDasharray="3 2" />
      <g fill="none" stroke="#a9adb2" strokeWidth="2.500">
        <circle cx="40" cy="48" r="26" />
        <ellipse cx="40" cy="48" rx="13" ry="26" />
        <path d="M14 48h52M40 22v52M20 33q20 8 40 0M20 63q20-8 40 0" />
      </g>
    </svg>
  ),
  nps: (
    <svg viewBox="0 0 96 96" className="h-24 w-24">
      <circle cx="48" cy="48" r="48" fill="#9fd9f1" />
      <path d="M21 41l27-20 42 50c-12 20-36 28-58 22z" fill="#82c5e2" opacity="0.9" />
      <rect x="21" y="21" width="27" height="20" fill="#e8ae45" stroke="#3a3f45" strokeWidth="2" />
      <rect x="48" y="48" width="27" height="20" fill="#d9584b" stroke="#3a3f45" strokeWidth="2" />
      <path d="M30 45h10M57 72h10" stroke="#eef2f5" strokeWidth="5" />
      <path d="M50 29h14M67 34v12M29 46v18M32 67h14" stroke="#fff" strokeWidth="1.500" strokeDasharray="3 2" fill="none" />
      <path d="M64 26h6v6h-6zM26 64h6v6h-6z" fill="none" stroke="#fff" strokeWidth="2" />
    </svg>
  ),
};

function DesktopIcon({ icon, label }) {
  return (
    <div className="flex h-[200px] w-[248px] flex-col items-center text-[24px] leading-8 font-medium whitespace-nowrap text-white [text-shadow:0_2px_3px_rgba(0,0,0,0.45)]">
      <div className="flex h-[100px] items-center">{icon}</div>
      <div className="mt-[5px] text-center whitespace-pre">{label}</div>
    </div>
  );
}

/* ---------- windows ---------- */

function WindowHeader({ title, icon, active }) {
  return (
    <div
      className={
        "grid h-[72px] shrink-0 grid-cols-3 items-center border-t-[6px] bg-linear-to-b to-white pb-1 " +
        (active ? "border-[#345686] from-[#e1e6f0] text-[#345686]" : "border-[#767b84] from-[#dadde3] text-[#b5b9c0]")
      }
    >
      <div className="pl-6">{icon}</div>
      <div className="pt-0.5 text-center text-[25.500px] leading-none font-bold">{title}</div>
      <div className={"flex justify-end pt-0.5 pr-4 " + (active ? "text-[#9a9fa7]" : "text-[#c9ccd1]")}>
        {["M3 3h18v8h-10v4M11 19v4", "M1 12h24", "M2 3h22v19H2zM2 6h22", "M2 2l22 21M24 2L2 23"].map((d) => (
          <div key={d} className="flex w-16 justify-center">
            <svg viewBox="0 0 26 24" className="w-[26px]" fill="none" stroke="currentColor" strokeWidth="3">
              <path d={d} />
            </svg>
          </div>
        ))}
      </div>
    </div>
  );
}

function Button({ children, className, arrow }) {
  return (
    <div className={"flex h-14 shrink-0 items-center justify-center gap-[13px] rounded-md border-2 border-[#c5d0dc] bg-linear-to-b from-[#f8fbff] to-[#eff3f9] text-[24px] leading-none " + className}>
      {children}
      {arrow && <Caret />}
    </div>
  );
}

function Meter({ label, value, color, bar }) {
  return (
    <div className="w-[224px]">
      <div className="flex justify-between text-[24px] leading-6 font-bold">
        <span className="text-[#414b55]">{label}</span>
        <span className={color}>{value}</span>
      </div>
      <div className={"mt-[17px] h-[9px] w-full " + bar} />
    </div>
  );
}

function Toggle() {
  return (
    <div className="flex h-[42px] w-[108px] shrink-0 items-center justify-between rounded-[4px] border-2 border-[#1d4a98] bg-[#2860bf] pl-[18px]">
      <div className="h-[22px] w-[22px] rounded-full border-[5px] border-white shadow-[0_3px_0_#1438a5]" />
      <div className="h-[39px] w-[42px] rounded-[4px] border-t-4 border-b-2 border-t-white border-b-[#14233c] bg-[#e4ebf4]" />
    </div>
  );
}

const containers = [
  ["27 MB", "Up for 7 days", "80x86-lychee1", ""],
  ["MB", "Up for 7 days"],
  ["MB", "Up for 7 days"],
  ["MB", "Up for 7 days"],
  ["MB", "Up for 7 days"],
  ["MB", "Up for 8 mins"],
  ["MB", "Up for 1 hour"],
  ["KB", "Up for 7 days"],
  ["MB", "Up for 7 days"],
  ["MB", "Up for 7 days", "", "oznu/guacamole:latest"],
];

function DockerWindow() {
  return (
    <div className="absolute top-[218px] left-[526px] flex h-[1342px] w-[2120px] flex-col overflow-hidden bg-white">
      <WindowHeader title="Docker" icon={<Whale className="w-12 opacity-60" />} />
      <div className="flex min-h-0 flex-1">
        <div className="w-[480px] shrink-0 border-r-4 border-[#e2e3e6] pt-[28px] pl-6">
          <div className="flex h-[58px] items-center pl-[18px] text-[27px] text-[#505a64]">
            <svg viewBox="0 0 44 40" className="mr-[14px] w-11" fill="none" stroke="#707780" strokeWidth="3.500">
              <rect x="2" y="2" width="40" height="36" />
              <path d="M0 5h44" strokeWidth="6" />
              <circle cx="14" cy="18" r="6" fill="#707780" stroke="none" />
              <path d="M24 15h12M24 22h12M8 30h28" />
            </svg>
            总览
          </div>
          <div className="mt-[22px] h-20 w-[424px] rounded-md bg-[#345686]" />
        </div>
        <div className="flex min-w-0 flex-1 flex-col pr-6 pl-8">
          <div className="flex shrink-0 gap-3 border-b-2 border-[#d5dfe9] pb-4">
            <Button className="w-[108px] text-[#505a64]">详情</Button>
            <Button className="w-[108px] text-[#a0a8b1]">编辑</Button>
            <Button className="w-[132px] text-[#505a64]" arrow>操作</Button>
            <Button className="w-[132px] text-[#505a64]" arrow>设置</Button>
            <div className="ml-auto flex h-14 w-[348px] items-center border-2 border-[#c5d0dc] pl-[18px] text-[24px] leading-none text-[#98a2ad]">
              <svg viewBox="0 0 30 32" className="mr-3 w-[30px]" fill="none" stroke="#505a64" strokeWidth="3.500">
                <path d="M2 3h26L18 17v8l-5 4V17z" />
                <path d="M15.500 17v11" strokeWidth="5" />
              </svg>
              搜索
            </div>
          </div>
          <div className="relative min-h-0 flex-1 overflow-hidden">
            {containers.map(([mem, up, name, image], i) => (
              <div key={i} className={"flex h-[122px] border-b-2 border-[#e8ecf1] pl-[25px] " + (i === 5 ? "bg-[#e0ebf9]" : "")}>
                <div className="w-[588px] pt-[21px]">
                  <div className="h-8 text-[30px] leading-8 font-bold text-[#345686]">{name}</div>
                  <div className="mt-4 text-[24px] leading-8 text-[#505a64]">{image}</div>
                </div>
                <div className="pt-[37px]">
                  <Meter label="CPU" value={i === 0 ? "0.05%" : ""} color="text-[#3f87b9]" bar="bg-[#b5cfe8]" />
                </div>
                <div className="ml-14 pt-[37px]">
                  <Meter label="RAM" value={mem} color="text-[#7bb95f]" bar="bg-[#e2efdc]" />
                </div>
                <div className="ml-[51px] w-[274px] pt-[27px] text-[24px] leading-9">
                  <div className="text-[#345686]">运行中</div>
                  <div className="text-[#505a64]">{up}</div>
                </div>
                <div className="pt-10">
                  <Toggle />
                </div>
              </div>
            ))}
            <div className="absolute top-0 right-[2px] h-[378px] w-4 bg-[#707780]/30" />
          </div>
        </div>
      </div>
    </div>
  );
}

const arrowPad = ["pl-[134px]", "pl-[166px]", "pl-[198px]"];
const tree = [
  [0, "002、国产电影"],
  [0, "003、韩国电影"],
  [0, "004、日本电影"],
  [0, "005、亚洲其他"],
  [0, "009、动画片"],
  [0, "040、纪录片"],
  [0, "096、国产剧"],
  [0, "097、日剧"],
  [0, "098、韩剧"],
  [0, "099、美剧"],
  [0, "Android软件"],
  [0, "Mac软件"],
  [0, "record", "open"],
  [1, "哔哩哔哩"],
  [1, "斗鱼", "selected"],
  [2, "尹恩恩1"],
  [2, "李哥儿DoubleLee"],
];

const TreeArrow = ({ open }) => (
  <svg viewBox="0 0 20 20" className="mr-[10px] w-5 shrink-0" fill="currentColor">
    <path d={open ? "M2 7h16l-8 7z" : "M6 2l9 8-9 8z"} />
  </svg>
);

const TableFolder = () => (
  <svg viewBox="0 0 32 28" className="mr-[9px] w-8">
    <path d="M2 1q0-1 1-1h14l4 4h9v1H2z" fill="#f2a23a" />
    <path d="M0 7h32v19q0 2-2 2H2q-2 0-2-2z" fill="#f7b53f" />
  </svg>
);

function StatusFooter({ text }) {
  return (
    <div className="mb-6 flex h-[57px] shrink-0 items-center justify-end border-t-2 border-b-2 border-t-[#e8ecf1] border-b-[#d5dfe9] pr-[22px] text-[24px] leading-none text-[#345686]">
      {text}
      <div className="mr-[24px] ml-[16px] h-[38px] w-[2px] bg-[#dde3ea]" />
      <Refresh className="w-7" />
    </div>
  );
}

function FileStation() {
  const path = ["netdisk", "airdisk", "USB-DISK-A", "record", "斗鱼"];
  return (
    <div className="absolute top-[412px] left-[270px] flex h-[1136px] w-[1840px] flex-col overflow-hidden bg-white text-[24px] leading-none text-[#505a64]">
      <WindowHeader active title="File Station" icon={<Folder className="w-12" />} />
      <div className="flex shrink-0 px-6">
        <Button className="mr-3 w-16 pl-[5px]">
          <svg viewBox="0 0 16 24" className="w-4" fill="none" stroke="#505a64" strokeWidth="3"><path d="M14 1L2 12l12 11" /></svg>
        </Button>
        <Button className="mr-[18px] w-16 pl-[7px]">
          <svg viewBox="0 0 16 24" className="w-4" fill="none" stroke="#a0a8b1" strokeWidth="3"><path d="M2 1l12 11L2 23" /></svg>
        </Button>
        <Button className="mr-[18px] w-16 pl-[7px]">
          <Refresh className="w-7" />
        </Button>
        <div className="flex h-14 w-[1160px] items-center border-2 border-[#c5d0dc] pr-[13px] pl-4 text-[#333b44]">
          {path.map((p, i) => (
            <React.Fragment key={p}>
              {i > 0 && (
                <svg viewBox="0 0 10 18" className="mr-[16.5px] ml-[18.5px] w-[10px]" fill="none" stroke="#505a64" strokeWidth="3"><path d="M1 1l7 8-7 8" /></svg>
              )}
              <span>{p}</span>
            </React.Fragment>
          ))}
          <MdStar className="ml-auto h-9 w-9 text-[#c5d0dc]" />
        </div>
        <div className="ml-4 flex h-14 w-[376px] items-center border-2 border-[#c5d0dc] pl-4 text-[#98a2ad]">
          <Search className="w-[33px] text-[#505a64]" />
          <Caret className="mr-2 ml-[6px] w-3 text-[#505a64]" />
          搜索
        </div>
      </div>
      <div className="mt-4 flex shrink-0 gap-3 px-6">
        <Button className="w-[132px]" arrow>上传</Button>
        <Button className="w-[132px]" arrow>新增</Button>
        <Button className="w-[132px]" arrow>操作</Button>
        <Button className="w-[132px]" arrow>工具</Button>
        <Button className="w-[108px]">设置</Button>
        <div className="ml-auto flex h-14 w-[114px] rounded-md border-2 border-[#c5d0dc] bg-linear-to-b from-[#f8fbff] to-[#eff3f9]">
          <div className="flex w-[74px] items-center justify-center border-r-2 border-[#c5d0dc] pl-[3px]">
            <svg viewBox="0 0 28 22" className="w-7" stroke="currentColor" strokeWidth="4"><path d="M0 2h28M0 11h28M0 20h28" /></svg>
          </div>
          <div className="flex flex-1 items-center justify-center pt-1">
            <Caret />
          </div>
        </div>
        <Button className="w-[60px] pb-1">
          <svg viewBox="0 0 32 26" className="w-8" fill="none" stroke="currentColor" strokeWidth="4"><path d="M0 3h14M0 13h14M0 23h14" /><path d="M24 1v16" strokeWidth="8" /><path d="M16 15h16l-8 10z" fill="currentColor" stroke="none" /></svg>
        </Button>
      </div>
      <div className="mt-4 flex min-h-0 flex-1">
        <div className="flex w-[584px] shrink-0 border-r-4 border-[#e2e3e6] pl-6">
          <div className="h-full w-[524px] overflow-hidden [mask-image:linear-gradient(to_bottom,rgba(0,0,0,0.15),black_34px)]">
            <div className="-mt-8">
              {tree.map(([level, label, state]) => (
                <div key={label} className={"flex h-14 items-center rounded-md " + arrowPad[level] + (state === "selected" ? " bg-[#345686] text-white" : "")}>
                  <TreeArrow open={!!state} />
                  {label}
                </div>
              ))}
            </div>
          </div>
          <div className="mt-[368px] ml-[6px] h-[342px] w-4 bg-[#d4d5d7]" />
        </div>
        <div className="flex min-w-0 flex-1 flex-col pr-5 pl-8">
          <div className="flex h-14 shrink-0 items-stretch border-t-2 border-b-2 border-t-[#d5dfe9] border-b-[#e8ecf1] text-[#345686]">
            <div className="flex w-[660px] items-center gap-2 border-r-2 border-[#e1e8ef] pl-[18px]">
              名称
              <svg viewBox="0 0 12 7" className="w-3"><path d="M0 7h12L6 0z" fill="currentColor" /></svg>
            </div>
            <div className="flex w-[162px] items-center justify-end border-r-2 border-[#e1e8ef] pr-8">大小</div>
            <div className="flex w-24 items-center border-r-2 border-[#e1e8ef] pl-4">文...</div>
            <div className="flex w-[254px] items-center justify-end border-r-2 border-[#e1e8ef] pr-5">修改日期</div>
            <div className="flex flex-1 flex-col items-center justify-center gap-1">
              <div className="h-1 w-1 bg-current" />
              <div className="h-1 w-1 bg-current" />
              <div className="h-1 w-1 bg-current" />
            </div>
          </div>
          {[["尹恩恩1", "2020-09-30 14:35..."], ["李哥儿DoubleLee", "2020-09-30 14:32..."]].map(([name, date]) => (
            <div key={name} className="flex h-[54px] w-[1182px] shrink-0 items-center border-b-2 border-[#e8ecf1] pl-[18px] whitespace-nowrap">
              <div className="flex w-[820px] items-center">
                <TableFolder />
                {name}
              </div>
              <div className="w-24">文件夹</div>
              <div className="tracking-[0.25px]">{date}</div>
            </div>
          ))}
          <div className="flex-1" />
          <StatusFooter text="2 个项目" />
        </div>
      </div>
    </div>
  );
}

function BackgroundFileStation() {
  return (
    <div className="absolute top-[518px] left-[544px] flex h-[1136px] w-[1840px] items-end bg-white text-[24px] leading-none text-[#505a64] shadow-[0_8px_24px_rgba(0,0,0,0.5)]">
      <div className="flex h-[300px] w-[584px] justify-between border-r-4 border-[#e2e3e6] pr-2">
        <div className="flex flex-col justify-end">
          <div className="flex h-14 items-center pl-[62px]">
            <TreeArrow />
            web
          </div>
          <div className="flex h-14 items-center pl-[30px] font-bold">
            <TreeArrow open />
            远程文件夹
          </div>
        </div>
        <div className="h-[276px] w-4 bg-[#d4d5d7]" />
      </div>
      <div className="w-[1256px] pr-5 pl-8">
        <StatusFooter text="没有任何资料" />
      </div>
    </div>
  );
}

/* ---------- widgets ---------- */

function Card({ icon, title, children }) {
  return (
    <div className="h-[416px] w-[640px] shrink-0 border-2 border-[#a9b5c3] bg-[#ebeff4] pr-4 pl-[18px]">
      <div className="flex h-[70px] items-center gap-[14px] text-[26px] font-bold">
        <div className="w-11">{icon}</div>
        {title}
      </div>
      {children}
    </div>
  );
}

function Volume({ n, pct, dash, used, free }) {
  return (
    <div className="mb-10 flex h-32 items-center">
      <svg viewBox="0 0 128 128" className="ml-6 w-32" fill="none" strokeWidth="20">
        <circle cx="64" cy="64" r="54" stroke="#ced6df" />
        <circle cx="64" cy="64" r="54" stroke="#419af0" strokeDasharray={dash} transform="rotate(-90 64 64)" />
        <text x="64" y="76" textAnchor="middle" fontSize="34" fill="#3a84dc" stroke="none">
          {pct}
          <tspan fontSize="22">%</tspan>
        </text>
      </svg>
      <div className="ml-[31px] pt-[3px] leading-[43.500px] whitespace-nowrap [word-spacing:1px]">
        <div className="font-bold">
          存储空间 {n} (<span className="text-[#4ca32f]">正常</span>)
        </div>
        <div>
          已用容量<span className="tracking-[2px]">:</span> {used} GB
        </div>
        <div>
          可用容量<span className="tracking-[2px]">:</span> {free} GB
        </div>
      </div>
    </div>
  );
}

function Bar({ label, value, fill }) {
  return (
    <div className="mb-4 flex h-8 items-center pl-[6px]">
      <div className="w-[168px] font-bold">{label}</div>
      <div className="h-8 w-[300px] overflow-hidden rounded-[5px] bg-[#ced6e0]">
        <div className={"h-full bg-linear-to-r from-[#43a9f8] to-[#4277da] " + fill} />
      </div>
      <div className="ml-5">{value}</div>
    </div>
  );
}

function Widgets() {
  return (
    <div className="relative flex h-full w-[680px] shrink-0 flex-col gap-4 overflow-hidden bg-[#314259]/97 pl-5 text-[24px] leading-none text-[#505a64] shadow-[-4px_0_12px_rgba(0,0,0,0.35)]">
      <div className="mb-[-16px] flex h-16 shrink-0 items-center pr-[34px] text-[#e3e9f1]">
        <svg viewBox="0 0 24 24" className="ml-4 w-6" stroke="currentColor" strokeWidth="4"><path d="M0 12h24M12 0v24" /></svg>
        <div className="mr-[33px] ml-auto h-[3px] w-6 bg-current" />
        <MdPushPin className="mr-[33px] h-9 w-9 rotate-45" />
        <svg viewBox="0 0 28 28" className="w-7" fill="currentColor"><path d="M0 4h20v8H0zM8 16h12v8H8zM24 0h4v28h-4z" /></svg>
      </div>
      <Card
        title="目前连接用户"
        icon={
          <svg viewBox="0 0 44 44" className="w-11">
            <path d="M0 44c0-10 8-9 17-12h10c9 3 17 2 17 12z" fill="#55bdb9" />
            <path d="M13 10c0-9 18-9 18 0 1 9-1 13-4 16v8l-5 6-5-6v-8c-3-3-5-7-4-16z" fill="#f9dcb4" />
            <path d="M12 16C10 4 15 0 22 0s12 4 10 16l-2-8H14z" fill="#704922" />
          </svg>
        }
      >
        <div className="flex h-14 items-center pl-[10px]">
          <Person className="w-7" />
          <div className="ml-[22px] w-[160px]">admin</div>
          <div className="w-[144px] tracking-[0.3px]">HTTP/HT...</div>
          <div className="w-[144px] tracking-[0.6px]">76:20:10</div>
          <div className="h-14 w-[2px] bg-[#d3d8de]" />
          <div className="ml-[22px] flex h-7 w-7 items-center justify-center rounded-full border-2 border-[#c94f4c] bg-[#e46b69]">
            <div className="h-1 w-4 bg-white" />
          </div>
          <div className="ml-auto"><Chevron up /></div>
        </div>
        <div className="mt-[243px] flex justify-end"><Chevron /></div>
      </Card>
      <Card
        title="存储"
        icon={
          <svg viewBox="0 0 44 44" className="w-11" fill="none" strokeWidth="10">
            <circle cx="22" cy="22" r="17" stroke="#3a87df" />
            <path d="M7 31A17 17 0 0 1 17 6" stroke="#f5b23d" />
            <path d="M17 6a17 17 0 0 1 12 0" stroke="#e9554b" />
            <path d="M18 11L13 0M28 11l6-10M12 27L1 34" stroke="#ebeff4" strokeWidth="1.500" />
          </svg>
        }
      >
        <div className="flex pt-[8px]">
          <div>
            <Volume n="1" pct="66" dash="224 400" used="33.05" free="17.32" />
            <Volume n="2" pct="51" dash="173 400" used="230.71" free="223.09" />
          </div>
          <div className="ml-auto flex h-[299px] flex-col justify-between">
            <Chevron up />
            <Chevron />
          </div>
        </div>
      </Card>
      <Card
        title="资源监控"
        icon={
          <svg viewBox="0 0 44 40" className="w-11">
            <rect width="44" height="40" rx="1" fill="#3a87df" />
            <path d="M5 5h34v30H5zM5 21h9l3-7 5 14 4-17 4 14 3-4h6" fill="none" stroke="#fff" strokeWidth="2.400" />
          </svg>
        }
      >
        <div className="pt-4">
          <Bar label="CPU" value="22%" fill="w-[66px]" />
          <Bar label="RAM" value="72%" fill="w-[216px]" />
        </div>
        <div className="flex h-9 items-center pl-[10px]">
          <div className="flex w-[170px] items-center gap-[14px] font-bold">
            局域网 1 <Caret />
          </div>
          <div className="flex w-[172px] items-center gap-[7px] pt-[5px] tracking-[0.4px] text-[#345686]">
            <svg viewBox="0 0 20 20" className="w-5"><path d="M10 0l10 10h-4v10H4V10H0z" fill="#3a87df" /></svg>
            1.1 MB/s
          </div>
          <div className="flex items-center gap-[7px] pt-[5px] tracking-[0.4px] text-[#4ca32f]">
            <svg viewBox="0 0 20 20" className="w-5"><path d="M10 20L0 10h4V0h12v10h4z" fill="#52ae33" /></svg>
            1.2 MB/s
          </div>
        </div>
        <div className="mt-[25px] flex">
          <div className="flex h-36 w-[178px] flex-col pt-[7px] text-right leading-5">
            {[1200, 1000, 800, 600, 400, 200, 0].map((n) => (
              <div key={n}>{n}</div>
            ))}
          </div>
          <svg viewBox="0 0 394 138" className="ml-[19px] h-[138px] w-[394px]" fill="none">
            <rect x="1" y="1" width="392" height="136" fill="#fff" stroke="#e0e8f1" strokeWidth="2" />
            <path d="M1 17h392M1 37h392M1 57h392M1 77h392M1 97h392M1 117h392" stroke="#e0e8f1" strokeWidth="2" />
            <path d="M1 125L118 122L148 73L203 73L246 76L296 70L332 76L376 44L391 15" stroke="#52ae33" strokeWidth="4" />
            <path d="M1 128L119 125L149 86L202 87L247 84L296 82L332 102L376 58L391 26" stroke="#3a87df" strokeWidth="4" />
          </svg>
        </div>
      </Card>
      <Card
        title="系统状况"
        icon={
          <svg viewBox="0 0 44 44" className="w-11">
            <path d="M22 0c6 4 12 4 18 4 4 20 2 32-18 40C2 36 0 24 4 4c6 0 12 0 18-4z" fill="#3a87df" />
            <text x="22" y="34" textAnchor="middle" fontSize="32" fontStyle="italic" fontWeight="700" fill="#fff" fontFamily="Liberation Serif">i</text>
          </svg>
        }
      >
        <div className="flex h-[154px] items-center pl-[22px]">
          <Check className="w-32" />
          <div className="ml-[33px] h-full whitespace-nowrap">
            <div className="mt-[31px] text-[39px] text-[#4ca32f]">良好</div>
            <div className="mt-[34px] text-[#3b4048]">您的 DiskStation 运转正常。</div>
          </div>
        </div>
        <div className="mt-[5px] flex h-14 items-center pl-[6px]">
          <div className="w-[296px] font-bold">系统名称</div>
          <div>DS3617xs</div>
        </div>
        <div className="flex h-14 items-center pl-[6px]">
          <div className="flex w-[296px] items-center gap-[14px] font-bold">
            局域网 1 <Caret />
          </div>
          <div className="tracking-[0.3px]">192.168.0.199</div>
        </div>
      </Card>
    </div>
  );
}

/* ---------- downloads ---------- */

function Download({ note, className }) {
  return (
    <div className={"flex h-[72px] shrink-0 items-center border-r-2 border-[#5c5d61] pb-1 " + className}>
      <svg viewBox="0 0 22 30" className="h-[30px] w-[22px]">
        <path d="M0 0h14l8 9v21H0z" fill="#c8404e" />
        <path d="M14 0l8 9h-8z" fill="#8e2733" />
        <path d="M4 12v9M8 12v9M10 12l9 5-9 4z" stroke="#fff" strokeWidth="1.600" fill="#fff" />
      </svg>
      <div className="ml-[30px] w-[300px] pt-0.5 whitespace-nowrap">
        <div className="text-[25px] leading-8 tracking-[0.5px] text-white">[2020-09-30 13....flv</div>
        <div className="text-[20px] leading-8 text-[#e8e9ea]">{note}</div>
      </div>
      <svg viewBox="0 0 18 12" className="ml-[8px] w-[18px]" fill="none" stroke="#c0c2c5" strokeWidth="3"><path d="M1 11l8-8 8 8" /></svg>
    </div>
  );
}

export default function App() {
  return (
    <div className="h-[2172px] w-[3432px] overflow-hidden bg-white p-9 font-['Inter','Noto_Sans_CJK_SC',sans-serif]">
      <div className="flex h-[2100px] w-[3360px] flex-col shadow-[0_4px_44px_rgba(0,0,0,0.42)]">
        <TabStrip />
        <Toolbar />
        <Bookmarks />
        <div className="relative flex h-[1780px] shrink-0 flex-col overflow-hidden font-['DejaVu_Sans','Noto_Sans_CJK_SC',sans-serif] [word-spacing:0.8px]">
          <Wallpaper />
          <Taskbar />
          <div className="flex min-h-0 flex-1">
            <div className="relative flex-1">
              <div className="absolute top-[50px] left-8">
                <DesktopIcon icon={art.package} label="套件中心" />
                <DesktopIcon icon={art.control} label="控制面板" />
                <DesktopIcon icon={<Folder className="w-24" />} label="File Station" />
                <DesktopIcon icon={art.help} label="DSM 说明" />
                <DesktopIcon icon={art.storage} label={"存储空间\n管理员"} />
                <DesktopIcon icon={art.cloud} label="Cloud Sync" />
                <DesktopIcon icon={art.backup} label="Hyper Backup" />
                <DesktopIcon icon={art.webdav} label="WebDAV Server" />
              </div>
              <div className="absolute top-[50px] left-[304px]">
                <DesktopIcon icon={<Whale className="w-[94px]" />} label="Docker" />
                <DesktopIcon icon={art.nps} label="nps内网穿透客户端" />
              </div>
              <BackgroundFileStation />
              <div className="absolute top-[218px] left-[526px] h-[1342px] w-[2120px] shadow-[0_8px_28px_rgba(0,0,0,0.6)]" />
              <DockerWindow />
              <div className="absolute top-[412px] left-[270px] h-[1136px] w-[1840px] shadow-[0_8px_28px_rgba(0,0,0,0.6)]" />
              <FileStation />
              <div className="absolute top-[420px] left-[669px] h-[430px] w-[1440px] rounded-[4px] border-[6px] border-[#ed4024]" />
            </div>
            <Widgets />
          </div>
        </div>
        <div className="flex min-h-0 flex-1 items-center border-t-2 border-[#232427] bg-[#35363a]">
          <Download note="已取消" className="w-[462px] pl-[45px]" />
          <Download note="失败 - 网络错误" className="w-[453px] pl-[37px]" />
          <div className="mb-1 ml-auto flex h-16 w-[158px] items-center justify-center rounded-lg border border-[#424347] bg-[#292a2d] text-[24px] font-bold text-white">显示全部</div>
          <svg viewBox="0 0 18 18" className="mr-[27px] mb-1 ml-[28px] w-[18px]" stroke="#c6c8ca" strokeWidth="3"><path d="M1 1l16 16M17 1L1 17" /></svg>
        </div>
      </div>
    </div>
  );
}
